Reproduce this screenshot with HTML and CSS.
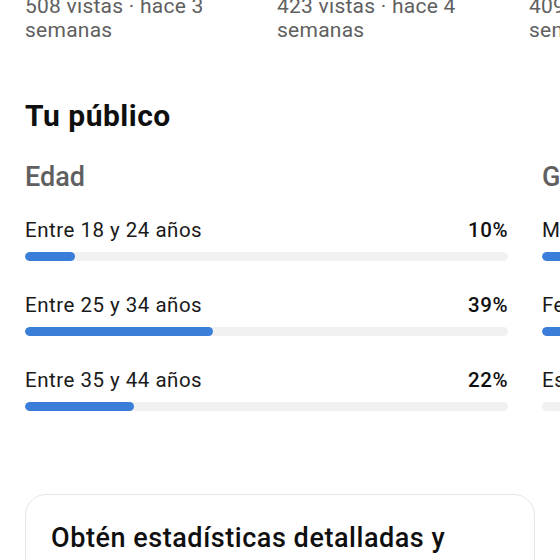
FILE: index.html
```html
<!DOCTYPE html>
<html lang="es">
<head>
    <meta charset="UTF-8">
    <meta name="viewport" content="width=device-width, initial-scale=1.0">
    <title>Tu público</title>
    <link rel="stylesheet" href="styles.css">
</head>
<body>
    <div class="video-row">
        <div class="video-card">
            <p class="video-meta">508 vistas · hace 3 semanas</p>
        </div>
        <div class="video-card">
            <p class="video-meta">423 vistas · hace 4 semanas</p>
        </div>
        <div class="video-card">
            <p class="video-meta">409 vistas · hace 5 semanas</p>
        </div>
    </div>

    <h2 class="section-title">Tu público</h2>

    <div class="audience">
        <div class="audience-col">
            <h3 class="col-title">Edad</h3>
            <div class="stat-row">
                <div class="stat-head">
                    <span class="stat-label">Entre 18 y 24 años</span>
                    <span class="stat-value">10%</span>
                </div>
                <div class="bar"><div class="bar-fill" style="width: 10.4%"></div></div>
            </div>
            <div class="stat-row">
                <div class="stat-head">
                    <span class="stat-label">Entre 25 y 34 años</span>
                    <span class="stat-value">39%</span>
                </div>
                <div class="bar"><div class="bar-fill" style="width: 39%"></div></div>
            </div>
            <div class="stat-row">
                <div class="stat-head">
                    <span class="stat-label">Entre 35 y 44 años</span>
                    <span class="stat-value">22%</span>
                </div>
                <div class="bar"><div class="bar-fill" style="width: 22.6%"></div></div>
            </div>
        </div>

        <div class="audience-col">
            <h3 class="col-title">Género</h3>
            <div class="stat-row">
                <div class="stat-head">
                    <span class="stat-label">Masculino</span>
                    <span class="stat-value">61%</span>
                </div>
                <div class="bar"><div class="bar-fill" style="width: 61%"></div></div>
            </div>
            <div class="stat-row">
                <div class="stat-head">
                    <span class="stat-label">Femenino</span>
                    <span class="stat-value">39%</span>
                </div>
                <div class="bar"><div class="bar-fill" style="width: 39%"></div></div>
            </div>
            <div class="stat-row">
                <div class="stat-head">
                    <span class="stat-label">Especificado por el usuario</span>
                    <span class="stat-value">0%</span>
                </div>
                <div class="bar"><div class="bar-fill" style="width: 0%"></div></div>
            </div>
        </div>
    </div>

    <div class="promo-card">
        <p class="promo-title">Obtén estadísticas detalladas y accede a más funciones en YouTube Studio</p>
    </div>
</body>
</html>
```

FILE: styles.css
```css
body {
    font-family: Roboto, "Noto Sans", Arial, sans-serif;
    background-color: #fff;
    color: #0f0f0f;
    margin: 0;
    padding: 0;
    overflow: hidden;
}

.video-row {
    display: flex;
    gap: 16px;
    padding-left: 25px;
    margin-top: -6.5px;
    overflow: hidden;
}

.video-card {
    flex: 0 0 236px;
}

.video-meta {
    margin: 0;
    font-size: 21px;
    line-height: 24.5px;
    letter-spacing: 0.25px;
    color: #606060;
}

.section-title {
    margin: 56.5px 25px 0;
    font-size: 30px;
    line-height: 34px;
    font-weight: 700;
    letter-spacing: 0.5px;
    color: #0f0f0f;
}

.audience {
    display: flex;
    gap: 34px;
    padding-left: 25px;
    margin-top: 28px;
    overflow: hidden;
}

.audience-col {
    flex: 0 0 483px;
}

.col-title {
    margin: 0 0 25px;
    font-size: 27px;
    line-height: 32px;
    font-weight: 500;
    color: #606060;
}

.stat-row {
    margin-bottom: 32.5px;
}

.stat-head {
    display: flex;
    justify-content: space-between;
    font-size: 20.5px;
    line-height: 24px;
    letter-spacing: 0.5px;
    white-space: nowrap;
    color: #1a1a1a;
}

.stat-value {
    font-weight: 500;
    color: #0f0f0f;
}

.bar {
    margin-top: 9.5px;
    height: 9px;
    border-radius: 5px;
    background-color: #f1f1f1;
    overflow: hidden;
}

.bar-fill {
    height: 100%;
    border-radius: 5px;
    background-color: #3b7ed9;
}

.promo-card {
    margin: 51px 25px 0;
    border: 1px solid #e5e5e5;
    border-radius: 21px;
    padding: 24px 25px;
}

.promo-title {
    margin: 0;
    font-size: 27px;
    line-height: 38px;
    font-weight: 500;
    letter-spacing: 0.55px;
}
```
